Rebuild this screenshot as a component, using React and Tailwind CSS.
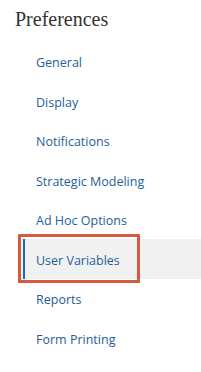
export default function App() {
  const items = [
    "General",
    "Display",
    "Notifications",
    "Strategic Modeling",
    "Ad Hoc Options",
    "User Variables",
    "Reports",
    "Form Printing",
  ];
  return (
    <div className="relative w-[201px] h-[372px] bg-white overflow-hidden">
      <h1 className="pt-[7px] pl-[15px] text-[20px] leading-[24px] text-[#333333] font-['Liberation_Serif',serif]">
        Preferences
      </h1>
      <ul className="mt-[10px] font-['Open_Sans',sans-serif] text-[12.5px] text-[#1f5e99]">
        {items.map((it) =>
          it === "User Variables" ? (
            <li key={it} className="ml-[21px] h-[39.6px] flex items-stretch bg-[#f1f1f1]">
              <span className="ml-[2px] w-[2px] bg-[#0f6bc2]" />
              <span className="pl-[11px] pt-[5px] flex items-center">{it}</span>
            </li>
          ) : (
            <li key={it} className="h-[39.6px] pt-[5px] flex items-center pl-[36px]">
              {it}
            </li>
          )
        )}
      </ul>
      <div className="absolute left-[18px] top-[234px] w-[122px] h-[49px] border-[3px] border-[#d65a3c] rounded-[1px]" />
    </div>
  );
}
